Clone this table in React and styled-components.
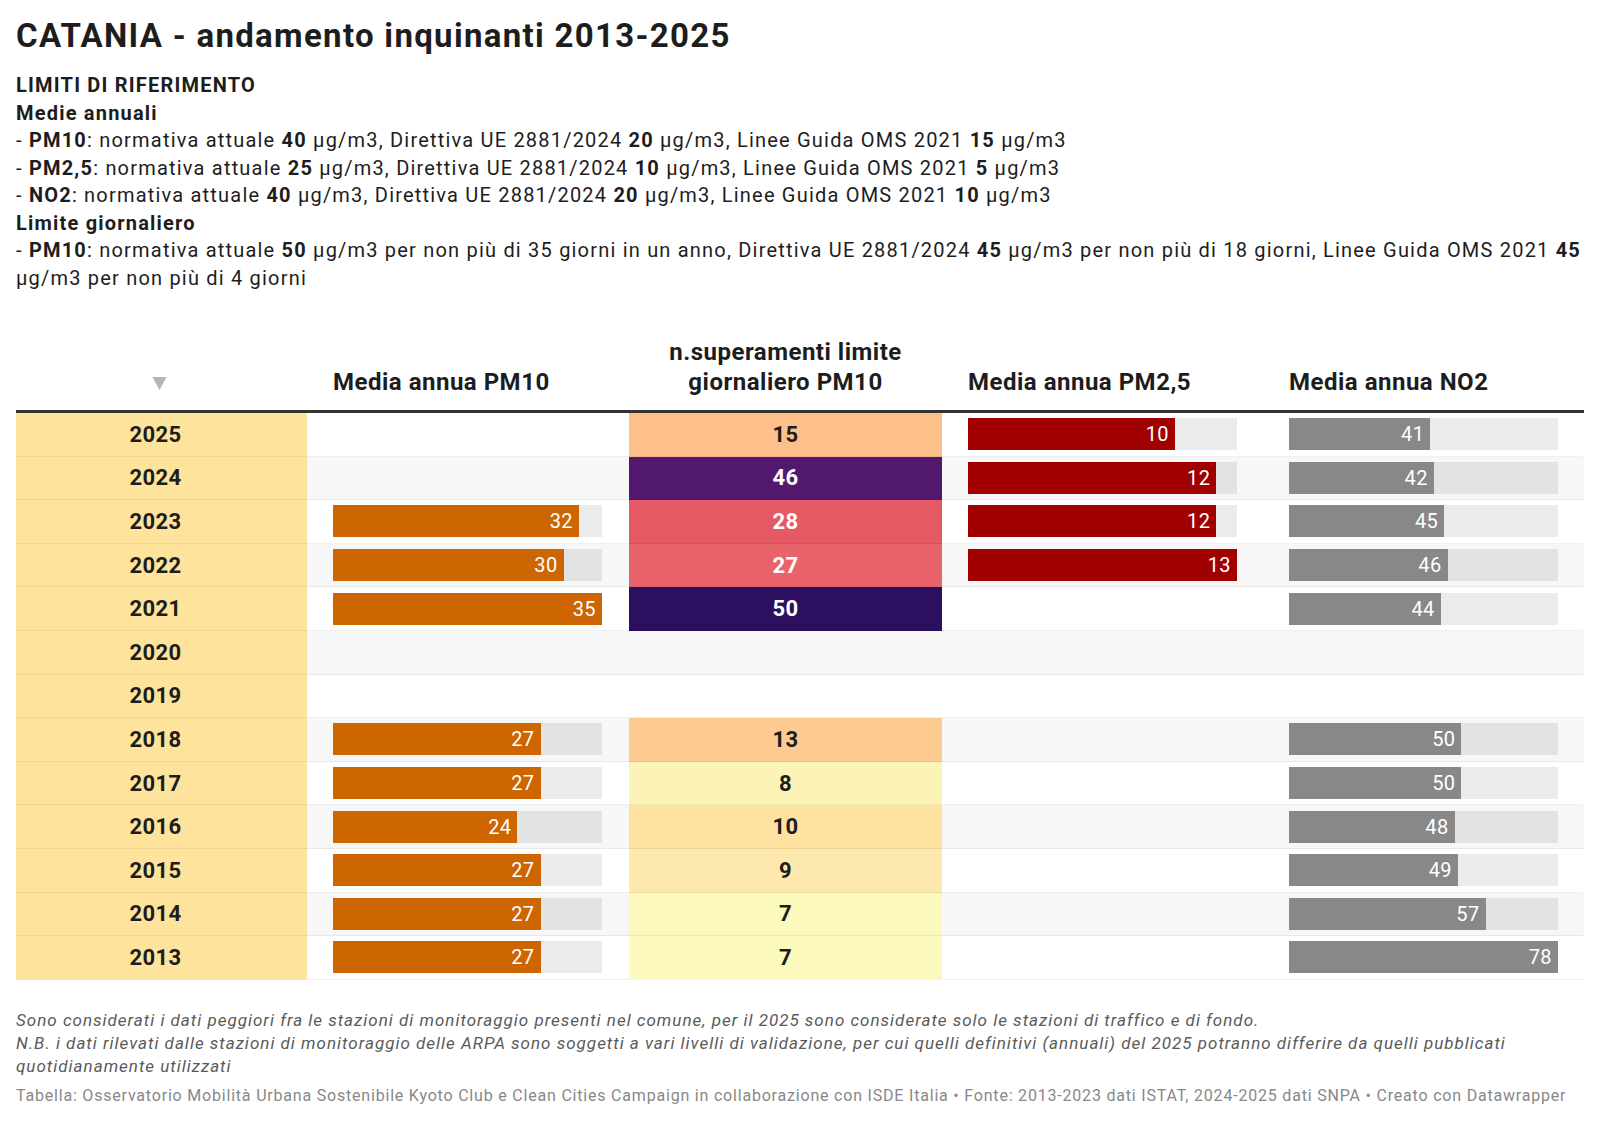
import React from 'react'
import styled, { createGlobalStyle } from 'styled-components'

const GlobalStyle = createGlobalStyle`
  body {
    margin: 0;
    background: #fff;
    font-family: Roboto, "Liberation Sans", sans-serif;
    color: #1d1d1d;
  }
`

// Data
const rows = [
  { year: 2025, pm10: null, ex: 15, pm25: 10, no2: 41 },
  { year: 2024, pm10: null, ex: 46, pm25: 12, no2: 42 },
  { year: 2023, pm10: 32, ex: 28, pm25: 12, no2: 45 },
  { year: 2022, pm10: 30, ex: 27, pm25: 13, no2: 46 },
  { year: 2021, pm10: 35, ex: 50, pm25: null, no2: 44 },
  { year: 2020, pm10: null, ex: null, pm25: null, no2: null },
  { year: 2019, pm10: null, ex: null, pm25: null, no2: null },
  { year: 2018, pm10: 27, ex: 13, pm25: null, no2: 50 },
  { year: 2017, pm10: 27, ex: 8, pm25: null, no2: 50 },
  { year: 2016, pm10: 24, ex: 10, pm25: null, no2: 48 },
  { year: 2015, pm10: 27, ex: 9, pm25: null, no2: 49 },
  { year: 2014, pm10: 27, ex: 7, pm25: null, no2: 57 },
  { year: 2013, pm10: 27, ex: 7, pm25: null, no2: 78 },
]

const heat = {
  7: '#fbf9bc',
  8: '#fcf4b6',
  9: '#fde9ad',
  10: '#fde2a2',
  13: '#fdca91',
  15: '#fdc08a',
  27: '#e8646a',
  28: '#e45963',
  46: '#52186e',
  50: '#2c105f',
}

const COLS = '291px 322px 313px 321px 320px'

// Styled components
const Page = styled.div`
  padding: 16px 16px 0;
  width: 1568px;
`

const Title = styled.h1`
  margin: 0;
  font-size: 33px;
  line-height: 40px;
  font-weight: 700;
  letter-spacing: 1.3px;
`

const Desc = styled.div`
  margin: 16px -8px 0 0;
  font-size: 20px;
  line-height: 27.5px;
  letter-spacing: 1.2px;

  b {
    font-weight: 700;
  }
`

const HeadRow = styled.div`
  display: grid;
  grid-template-columns: ${COLS};
  align-items: end;
  margin-top: 45px;
  padding-bottom: 13px;
  border-bottom: 3px solid #333;
`

const HeadCell = styled.div`
  font-size: 24px;
  line-height: 30px;
  font-weight: 700;
  letter-spacing: 0.5px;
  text-align: ${(p) => p.$align || 'left'};
  padding-left: ${(p) => (p.$align === 'center' ? 0 : '26px')};
`

const SortArrow = styled.svg`
  display: block;
  margin: 0 auto 7px;
  padding-right: 5px;
`

const Row = styled.div`
  display: grid;
  grid-template-columns: ${COLS};
  height: 43.6px;
  background: ${(p) => (p.$stripe ? '#f7f7f7' : '#fff')};
`

const Cell = styled.div`
  box-sizing: border-box;
  border-bottom: ${(p) => (p.$last ? 'none' : '1px solid rgba(0,0,0,0.06)')};
  display: flex;
  align-items: center;
`

const YearCell = styled(Cell)`
  background: #fde39c;
  justify-content: center;
  padding-right: 12px;
  font-size: 22px;
  font-weight: 700;
  letter-spacing: 0.4px;
`

const HeatCell = styled(Cell)`
  background: ${(p) => p.$bg || 'transparent'};
  color: ${(p) => (p.$dark ? '#fff' : '#1d1d1d')};
  justify-content: center;
  font-size: 22px;
  font-weight: 700;
  letter-spacing: 0.4px;
`

const BarCell = styled(Cell)`
  padding: 0 ${(p) => p.$pr || 26}px 0 26px;
`

const Track = styled.div`
  width: 100%;
  height: 32px;
  background: rgba(0, 0, 0, 0.08);
`

const Fill = styled.div`
  box-sizing: border-box;
  height: 100%;
  background: ${(p) => p.$color};
  color: #fff;
  font-size: 20px;
  letter-spacing: 0.4px;
  display: flex;
  align-items: center;
  justify-content: flex-end;
  padding-right: 6px;
`

const Notes = styled.div`
  margin-top: 29px;
  font-size: 17px;
  line-height: 23px;
  font-style: italic;
  letter-spacing: 1px;
  color: #5a5a5a;
`

const Source = styled.div`
  margin-top: 7px;
  font-size: 16px;
  line-height: 22px;
  letter-spacing: 0.8px;
  color: #888;
`

function Bar({ value, max, color, pr }) {
  return (
    <BarCell $pr={pr}>
      {value != null && (
        <Track>
          <Fill $color={color} style={{ width: `${(value / max) * 100}%` }}>
            {value}
          </Fill>
        </Track>
      )}
    </BarCell>
  )
}

function App() {
  return (
    <Page>
      <GlobalStyle />
      <Title>CATANIA - andamento inquinanti 2013-2025</Title>
      <Desc>
        <b>LIMITI DI RIFERIMENTO</b>
        <br />
        <b>Medie annuali</b>
        <br />- <b>PM10</b>: normativa attuale <b>40</b> µg/m3, Direttiva UE 2881/2024 <b>20</b> µg/m3, Linee Guida OMS 2021 <b>15</b> µg/m3
        <br />- <b>PM2,5</b>: normativa attuale <b>25</b> µg/m3, Direttiva UE 2881/2024 <b>10</b> µg/m3, Linee Guida OMS 2021 <b>5</b> µg/m3
        <br />- <b>NO2</b>: normativa attuale <b>40</b> µg/m3, Direttiva UE 2881/2024 <b>20</b> µg/m3, Linee Guida OMS 2021 <b>10</b> µg/m3
        <br />
        <b>Limite giornaliero</b>
        <br />- <b>PM10</b>: normativa attuale <b>50</b> µg/m3 per non più di 35 giorni in un anno, Direttiva UE 2881/2024 <b>45</b> µg/m3 per non più di 18 giorni, Linee Guida OMS 2021 <b>45</b> µg/m3 per non più di 4 giorni
      </Desc>

      <HeadRow>
        <HeadCell $align="center">
          <SortArrow width="19" height="13" viewBox="0 0 14 13">
            <polygon points="0,0 14,0 7,13" fill="#b5b5b5" />
          </SortArrow>
        </HeadCell>
        <HeadCell>Media annua PM10</HeadCell>
        <HeadCell $align="center">
          n.superamenti limite
          <br />
          giornaliero PM10
        </HeadCell>
        <HeadCell>Media annua PM2,5</HeadCell>
        <HeadCell>Media annua NO2</HeadCell>
      </HeadRow>

      {rows.map((r, i) => {
        const last = i === rows.length - 1
        return (
          <Row key={r.year} $stripe={i % 2 === 1}>
            <YearCell $last={last}>{r.year}</YearCell>
            <Bar value={r.pm10} max={35} color="#cd6600" pr={27} />
            <HeatCell $last={last} $bg={heat[r.ex]} $dark={r.ex >= 27}>
              {r.ex}
            </HeatCell>
            <Bar value={r.pm25} max={13} color="#a00000" />
            <Bar value={r.no2} max={78} color="#888888" pr={25} />
          </Row>
        )
      })}

      <Notes>
        Sono considerati i dati peggiori fra le stazioni di monitoraggio presenti nel comune, per il 2025 sono considerate solo le stazioni di traffico e di fondo.
        <br />
        N.B. i dati rilevati dalle stazioni di monitoraggio delle ARPA sono soggetti a vari livelli di validazione, per cui quelli definitivi (annuali) del 2025 potranno differire da quelli pubblicati quotidianamente utilizzati
      </Notes>
      <Source>
        Tabella: Osservatorio Mobilità Urbana Sostenibile Kyoto Club e Clean Cities Campaign in collaborazione con ISDE Italia • Fonte: 2013-2023 dati ISTAT, 2024-2025 dati SNPA • Creato con Datawrapper
      </Source>
    </Page>
  )
}

export default App
